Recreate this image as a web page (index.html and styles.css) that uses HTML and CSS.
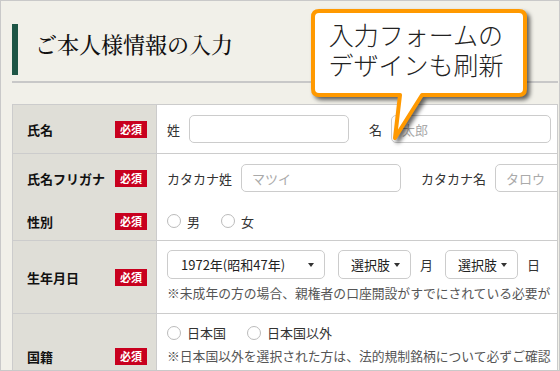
FILE: index.html
```html
<!DOCTYPE html>
<html lang="ja">
<head>
    <meta charset="UTF-8">
    <meta name="viewport" content="width=device-width, initial-scale=1.0">
    <title>ご本人様情報の入力</title>
    <link rel="stylesheet" href="styles.css">
</head>
<body>
    <div class="page">
        <div class="heading">
            <h1>ご本人様情報の入力</h1>
        </div>
        <div class="heading-rule"></div>

        <div class="form-table">
            <div class="row">
                <div class="label"><span>氏名</span><span class="badge">必須</span></div>
                <div class="field">
                    <span class="field-name">姓</span>
                    <input class="text-input" type="text">
                    <span class="field-name next">名</span>
                    <input class="text-input" type="text" placeholder="太郎">
                </div>
            </div>

            <div class="row no-line">
                <div class="label"><span>氏名フリガナ</span><span class="badge">必須</span></div>
                <div class="field">
                    <span class="field-name">カタカナ姓</span>
                    <input class="text-input" type="text" placeholder="マツイ">
                    <span class="field-name next">カタカナ名</span>
                    <input class="text-input" type="text" placeholder="タロウ">
                </div>
            </div>

            <div class="row row-short">
                <div class="label"><span>性別</span><span class="badge">必須</span></div>
                <div class="field">
                    <label class="radio"><span class="radio-mark"></span>男</label>
                    <label class="radio"><span class="radio-mark"></span>女</label>
                </div>
            </div>

            <div class="row">
                <div class="label"><span>生年月日</span><span class="badge">必須</span></div>
                <div class="field stacked">
                    <div class="select-line">
                        <div class="select select-year"><span>1972年(昭和47年)</span><span class="caret"></span></div>
                        <div class="select"><span>選択肢</span><span class="caret"></span></div>
                        <span class="unit">月</span>
                        <div class="select"><span>選択肢</span><span class="caret"></span></div>
                        <span class="unit">日</span>
                    </div>
                    <p class="note">※未成年の方の場合、親権者の口座開設がすでにされている必要が</p>
                </div>
            </div>

            <div class="row">
                <div class="label"><span>国籍</span><span class="badge">必須</span></div>
                <div class="field stacked nation">
                    <div class="radio-line">
                        <label class="radio"><span class="radio-mark"></span>日本国</label>
                        <label class="radio"><span class="radio-mark"></span>日本国以外</label>
                    </div>
                    <p class="note tall">※日本国以外を選択された方は、法的規制銘柄について必ずご確認</p>
                    <p class="note tall indent">法的規制銘柄一覧</p>
                </div>
            </div>
        </div>

        <!-- speech bubble laid over the form -->
        <div class="callout">
            <svg class="callout-shape" width="232" height="142" viewBox="0 0 232 142">
                <path d="M14 6 H214 Q220 6 220 12 V84 Q220 90 214 90 H117 L90 133 L95 90 H14 Q8 90 8 84 V12 Q8 6 14 6 Z"
                      fill="#fff" stroke="#ff9900" stroke-width="4" stroke-linejoin="round"/>
            </svg>
            <p class="callout-text">入力フォームの<br>デザインも刷新</p>
        </div>
    </div>
</body>
</html>
```

FILE: styles.css
```css
:root {
    --beige: #f1f0e9;
    --line: #cccccc;
    --label-bg: #dfded7;
    --green: #1e5646;
    --red: #c8001e;
    --orange: #ff9900;
    --text: #222222;
}

* {
    margin: 0;
    padding: 0;
    box-sizing: border-box;
}

html, body {
    background-color: var(--beige);
}

.page {
    position: relative;
    width: 560px;
    height: 371px;
    overflow: hidden;
    border: 1px solid #c9c9c9;
    padding: 23px 1px 0 11px;
    font-family: "Noto Sans CJK JP", sans-serif;
    font-size: 13px;
    color: var(--text);
}

.heading {
    height: 51px;
    border-left: 6px solid var(--green);
    padding: 8px 0 0 17px;
}

.heading h1 {
    font-family: "Noto Serif CJK JP", "Noto Sans CJK JP", serif;
    font-size: 22px;
    line-height: 24px;
    font-weight: 500;
    color: #111;
}

.heading-rule {
    height: 2px;
    margin-top: 6px;
    background-color: #c8c8c8;
}

.form-table {
    margin-top: 21px;
    border: 1px solid var(--line);
    border-bottom: none;
    background-color: white;
}

.row {
    display: grid;
    grid-template-columns: 144px 1fr;
    border-bottom: 1px solid var(--line);
}

.row.no-line {
    border-bottom: none;
}

.label {
    display: flex;
    align-items: center;
    justify-content: space-between;
    padding: 0 9px 0 14px;
    background-color: var(--label-bg);
    border-right: 1px solid var(--line);
    font-weight: bold;
    color: #111;
}

.badge {
    width: 32px;
    height: 17px;
    line-height: 17px;
    text-align: center;
    font-size: 11px;
    font-weight: bold;
    color: white;
    background-color: var(--red);
}

.field {
    display: flex;
    align-items: center;
    padding: 10px 0 10px 10px;
    overflow: hidden;
    white-space: nowrap;
    color: #333;
}

.field.stacked {
    flex-direction: column;
    align-items: flex-start;
    padding: 9px 0 10px 10px;
}

.field-name {
    margin-right: 9px;
}

.field-name.next {
    margin-left: 20px;
}

.text-input {
    flex-shrink: 0;
    width: 160px;
    height: 28px;
    border: 1px solid var(--line);
    border-radius: 5px;
    padding: 0 10px;
    font-family: inherit;
    font-size: 13px;
    color: #333;
    background-color: white;
}

.text-input::placeholder {
    color: #aaaaaa;
}

.row-short .field {
    height: 38px;
    padding: 0 0 0 10px;
    gap: 21px;
}

.radio {
    display: inline-flex;
    align-items: center;
    gap: 6px;
}

.radio-mark {
    width: 14px;
    height: 14px;
    border: 1px solid #bbbbbb;
    border-radius: 50%;
    background-color: white;
}

.select-line {
    display: flex;
    align-items: center;
}

.select {
    display: flex;
    align-items: center;
    justify-content: space-between;
    width: 73px;
    height: 29px;
    padding: 0 10px 0 12px;
    border: 1px solid var(--line);
    border-radius: 5px;
    color: #222;
}

.select-year {
    width: 158px;
    margin-right: 13px;
    padding-left: 13px;
}

.caret {
    width: 0;
    height: 0;
    border-left: 3px solid transparent;
    border-right: 3px solid transparent;
    border-top: 4px solid #333;
}

.unit {
    margin: 0 12px 0 9px;
}

.note {
    margin-top: 4px;
    font-size: 12.8px;
    line-height: 20px;
    color: #555;
}

.nation {
    padding-top: 6px;
}

.radio-line {
    display: flex;
    gap: 21px;
    line-height: 20px;
}

.note.tall {
    margin-top: 2px;
    line-height: 22px;
}

.note.tall + .note.tall {
    margin-top: 0;
}

.note.indent {
    padding-left: 39px;
}

.callout {
    position: absolute;
    left: 304px;
    top: 4px;
    width: 232px;
    height: 142px;
}

.callout-shape {
    display: block;
    filter: drop-shadow(3px 3px 2px rgba(0, 0, 0, 0.6));
}

.callout-text {
    position: absolute;
    left: 8px;
    top: 14px;
    width: 206px;
    text-align: center;
    font-size: 25px;
    font-weight: 300;
    line-height: 30px;
    color: #222;
}
```
